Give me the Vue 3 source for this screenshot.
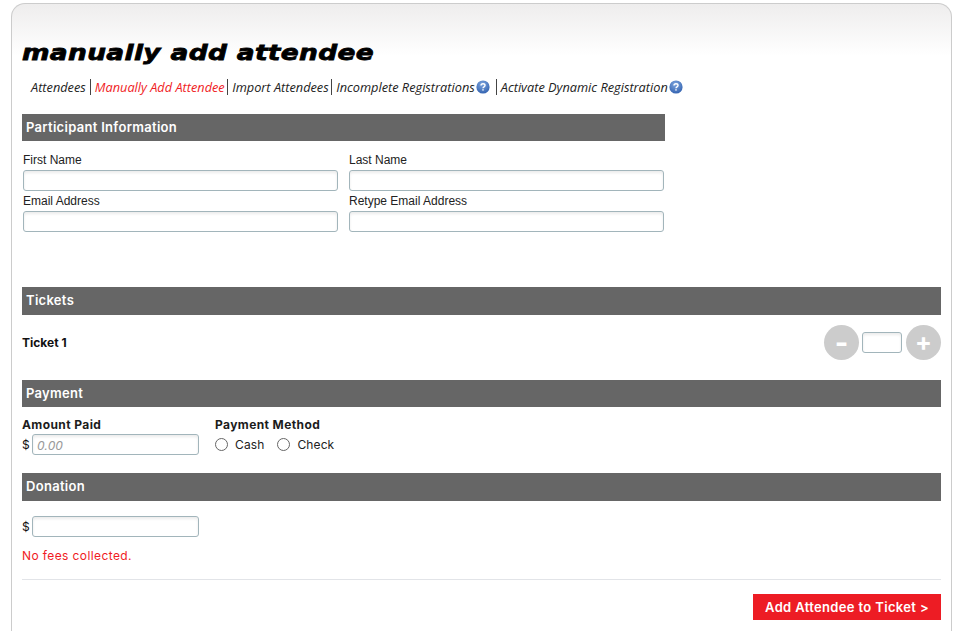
<script setup>
const tabs = [
  { label: 'Attendees' },
  { label: 'Manually Add Attendee', active: true },
  { label: 'Import Attendees' },
  { label: 'Incomplete Registrations', help: true },
  { label: 'Activate Dynamic Registration', help: true }
]
</script>

<template>
  <div class="page">
    <main class="card">
      <h1 class="title">manually add attendee</h1>
      <nav class="tabs">
        <span v-for="t in tabs" :key="t.label" class="tab" :class="{ active: t.active, helped: t.help }">
          {{ t.label }}
          <svg v-if="t.help" class="help" width="14" height="14" viewBox="0 0 14 14">
            <defs>
              <radialGradient id="hg" cx="45%" cy="30%" r="75%">
                <stop offset="0" stop-color="#7fa6de" />
                <stop offset="1" stop-color="#2f5fae" />
              </radialGradient>
            </defs>
            <circle cx="7" cy="7" r="6.6" fill="url(#hg)" />
            <path d="M5 5.5C5 4.3 6 3.7 7 3.7s2 .6 2 1.7c0 1.5-2 1.4-2 2.9" fill="none" stroke="#fff" stroke-width="1.4" />
            <rect x="6.3" y="9.2" width="1.4" height="1.4" fill="#fff" />
          </svg>
        </span>
      </nav>

      <section class="bar bar-short">Participant Information</section>
      <div class="fields">
        <label class="field"><span>First Name</span><input class="box" type="text" /></label>
        <label class="field"><span>Last Name</span><input class="box" type="text" /></label>
        <label class="field"><span>Email Address</span><input class="box" type="text" /></label>
        <label class="field"><span>Retype Email Address</span><input class="box" type="text" /></label>
      </div>

      <section class="bar tickets-bar">Tickets</section>
      <div class="ticket">
        <strong>Ticket 1</strong>
        <div class="stepper">
          <button class="round minus" type="button">-</button>
          <input class="box qty" type="text" />
          <button class="round plus" type="button">+</button>
        </div>
      </div>

      <section class="bar payment-bar">Payment</section>
      <div class="payment">
        <div class="amount">
          <div class="plabel">Amount Paid</div>
          <div class="money"><span class="dollar">$</span><input class="box money-input" type="text" placeholder="0.00" /></div>
        </div>
        <div class="method">
          <div class="plabel">Payment Method</div>
          <div class="radios">
            <label class="radio"><i class="dot"></i>Cash</label>
            <label class="radio"><i class="dot"></i>Check</label>
          </div>
        </div>
      </div>

      <section class="bar donation-bar">Donation</section>
      <div class="money donation"><span class="dollar">$</span><input class="box money-input" type="text" /></div>
      <p class="fees">No fees collected.</p>
      <hr class="rule" />
      <div class="actions"><button class="submit" type="button">Add Attendee to Ticket &gt;</button></div>
    </main>
  </div>
</template>

<style>
html, body { margin: 0; background: #fff; overflow: hidden; }
</style>

<style scoped>
.page {
  width: 964px;
  height: 631px;
  overflow: hidden;
  padding: 3px 12px 0 11px;
  box-sizing: border-box;
  font-family: "Inter", "Liberation Sans", sans-serif;
  color: #111;
}
.card {
  box-sizing: border-box;
  height: 640px;
  border: 1px solid #ccc;
  border-bottom: 0;
  border-radius: 14px 14px 0 0;
  padding: 0 10px;
  background: linear-gradient(#eeeded 0, #fff 52px);
}
.title {
  margin: 0;
  padding-top: 34px;
  height: 32px;
  font: italic 700 22px/30px "DejaVu Sans", sans-serif;
  letter-spacing: 0.3px;
  color: #000;
  -webkit-text-stroke: 0.8px #000;
  white-space: nowrap;
  transform: scaleX(1.2);
  transform-origin: left center;
}
.tabs {
  display: flex;
  align-items: center;
  height: 18px;
  margin-top: 8px;
  padding-left: 9px;
  font: italic 400 12.75px/18px "Open Sans", sans-serif;
  color: #222;
}
.tab {
  display: flex;
  align-items: center;
  gap: 1.5px;
  height: 16px;
  padding: 0 2.5px 0 4px;
  white-space: nowrap;
  border-left: 1px solid #444;
}
.tab:first-child { border-left: 0; padding: 0 4px 0 0; }
.tab.helped { padding-right: 5.5px; }
.tab.active { color: #f01c24; }
.help { flex: none; }
.bar {
  height: 27px;
  background: #666;
  color: #fff;
  padding-left: 4px;
  font-size: 13px;
  font-weight: 600;
  line-height: 27px;
  letter-spacing: 0.3px;
}
.bar-short { width: 643px; margin-top: 18px; box-sizing: border-box; }
.fields {
  display: grid;
  grid-template-columns: 315px 315px;
  column-gap: 11px;
  padding: 12px 0 0 1px;
  height: 146px;
  box-sizing: border-box;
  align-content: start;
}
.field { display: block; height: 41px; }
.field span {
  display: block;
  height: 17px;
  font: 12px/15px "Liberation Sans", Arial, sans-serif;
  color: #222;
}
.box {
  display: block;
  box-sizing: border-box;
  width: 100%;
  height: 21px;
  margin: 0;
  padding: 0 4px;
  border: 1px solid #a2b5bb;
  border-radius: 3px;
  background: #fff;
  box-shadow: inset 0 2px 3px rgba(0, 0, 0, 0.08);
  outline: none;
}
.tickets-bar { height: 28px; line-height: 27px; }
.ticket {
  display: flex;
  justify-content: space-between;
  align-items: center;
  height: 35px;
  margin: 10px 0 20px;
}
.ticket strong { font-size: 12px; font-weight: 700; }
.stepper { display: flex; align-items: center; gap: 3px; }
.qty { width: 40px; }
.stepper .plus { margin-left: 1px; }
.round {
  width: 35px;
  height: 35px;
  padding: 0;
  border: 0;
  border-radius: 50%;
  background: #ccc;
  color: #fff;
  font: 700 25px/33px "Inter", "Liberation Sans", sans-serif;
}
.round.minus { font-size: 29px; line-height: 35px; }
.payment { display: flex; height: 66px; padding-top: 10px; box-sizing: border-box; }
.amount { width: 193px; }
.plabel { font-size: 12px; font-weight: 700; line-height: 15px; height: 17px; color: #1c1c1c; letter-spacing: 0.4px; }
.money { display: flex; align-items: center; }
.dollar { width: 10px; font-size: 12px; }
.money-input { width: 167px; font: italic 13.5px "Open Sans", sans-serif; }
.money-input::placeholder { color: #999; opacity: 1; }
.radios { display: flex; gap: 13px; margin-top: 3px; }
.radio { display: flex; align-items: center; font-size: 12px; letter-spacing: 0.12px; color: #222; height: 15px; }
.dot {
  width: 13px;
  height: 13px;
  box-sizing: border-box;
  border: 1px solid #666;
  border-radius: 50%;
  margin-right: 7px;
  background: #fff;
}
.donation-bar { height: 28px; line-height: 27px; }
.donation { margin-top: 15px; }
.fees { margin: 11px 0 0; font-size: 12px; line-height: 15px; color: #f01c24; letter-spacing: 0.4px; }
.rule { height: 1px; border: 0; background: #e2e4e8; margin: 16px 0 14px; }
.actions { display: flex; justify-content: flex-end; }
.submit {
  width: 188px;
  height: 26px;
  padding: 0;
  border: 0;
  background: #ed1c24;
  color: #fff;
  font: 600 13px/26px "Inter", "Liberation Sans", sans-serif;
  letter-spacing: 0.35px;
}
</style>
